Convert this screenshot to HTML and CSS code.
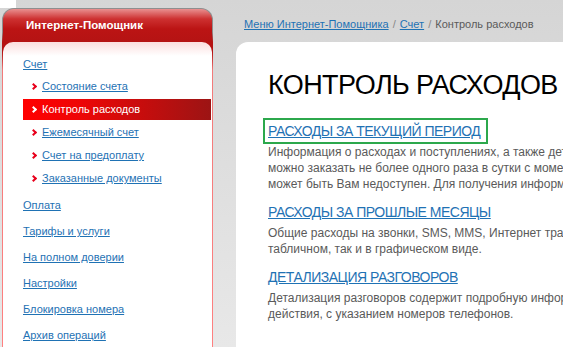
FILE: index.html
```html
<!DOCTYPE html>
<html lang="ru">
<head>
    <meta charset="UTF-8">
    <title>Контроль расходов</title>
    <link rel="stylesheet" href="styles.css">
</head>
<body>
    <div class="page">
        <div class="sidebar">
            <div class="sidebar-head">Интернет-Помощник</div>
            <div class="sidebar-body">
                <ul class="menu">
                    <li class="has-sub">
                        <a href="#">Счет</a>
                        <ul class="sub">
                            <li><a href="#">Состояние счета</a></li>
                            <li class="active"><a href="#">Контроль расходов</a></li>
                            <li><a href="#">Ежемесячный счет</a></li>
                            <li><a href="#">Счет на предоплату</a></li>
                            <li><a href="#">Заказанные документы</a></li>
                        </ul>
                    </li>
                    <li><a href="#">Оплата</a></li>
                    <li><a href="#">Тарифы и услуги</a></li>
                    <li><a href="#">На полном доверии</a></li>
                    <li><a href="#">Настройки</a></li>
                    <li><a href="#">Блокировка номера</a></li>
                    <li><a href="#">Архив операций</a></li>
                </ul>
            </div>
        </div>
        <div class="main">
            <div class="crumbs">
                <a href="#">Меню Интернет-Помощника</a> <span class="sep">/</span>
                <a href="#">Счет</a> <span class="sep">/</span>
                Контроль расходов
            </div>
            <div class="content">
                <h1>КОНТРОЛЬ РАСХОДОВ</h1>
                <div class="section">
                    <h2 class="marked"><a href="#">РАСХОДЫ ЗА ТЕКУЩИЙ ПЕРИОД</a></h2>
                    <p>Информация о расходах и поступлениях, а также детализация расходов за текущий период. Отчет<br>
                    можно заказать не более одного раза в сутки с момента последнего заказа. В некоторых случаях отчет<br>
                    может быть Вам недоступен. Для получения информации обратитесь в контактный центр.</p>
                </div>
                <div class="section">
                    <h2><a href="#">РАСХОДЫ ЗА ПРОШЛЫЕ МЕСЯЦЫ</a></h2>
                    <p>Общие расходы на звонки, SMS, MMS, Интернет трафик и другие услуги за прошлые месяцы как в<br>
                    табличном, так и в графическом виде.</p>
                </div>
                <div class="section">
                    <h2><a href="#">ДЕТАЛИЗАЦИЯ РАЗГОВОРОВ</a></h2>
                    <p>Детализация разговоров содержит подробную информацию о всех звонках за период<br>
                    действия, с указанием номеров телефонов.</p>
                </div>
            </div>
        </div>
    </div>
</body>
</html>
```

FILE: styles.css
```css
html, body {
    height: 100%;
}
body {
    margin: 0;
    font-family: Arial, "Liberation Sans", sans-serif;
    font-size: 11px;
    overflow: hidden;
    background:
        linear-gradient(#fff, #fff) 0 0 / 16px 8px no-repeat,
        linear-gradient(#d5d5d5, #e8e8e8) #e8e8e8;
}
a {
    color: #1f72b4;
}
ul {
    list-style: none;
    margin: 0;
    padding: 0;
}
.page {
    display: flex;
    align-items: flex-start;
    padding: 8px 0 0 2px;
    height: 100%;
    box-sizing: border-box;
}
.sidebar {
    width: 211px;
    flex: none;
    height: 100%;
    display: flex;
    flex-direction: column;
    padding: 1px 1px 0;
    border-radius: 12px 12px 0 0;
    background: linear-gradient(#8e8e8e 24px, #b51313 34px, #b51313 44px, #f27a7a 62px, #ff8080);
    box-sizing: border-box;
}
.sidebar-head {
    flex: none;
    height: 33px;
    padding: 10px 0 0 23px;
    box-sizing: border-box;
    font-size: 11.5px;
    font-weight: bold;
    color: #fff;
    border-radius: 11px 11px 0 0;
    background: linear-gradient(#e99090, #cd3030 10px, #bb1414 20px, #b51313);
}
.sidebar-body {
    flex: 1;
    min-height: 0;
    overflow: hidden;
    padding: 14px 0 0 20px;
    border-radius: 10px 10px 0 0;
    background: linear-gradient(#fbdede, #fff 14px);
}
.menu > li {
    line-height: 16px;
    margin-bottom: 10px;
}
.menu > li.has-sub {
    margin-bottom: 8px;
}
.sub {
    padding-top: 4px;
}
.sub li {
    height: 21px;
    line-height: 21px;
    padding-left: 19px;
    margin-right: 1px;
    position: relative;
}
.sub li + li {
    margin-top: 2px;
}
.sub li::before {
    content: "";
    position: absolute;
    left: 8px;
    top: 8px;
    width: 3px;
    height: 3px;
    border-top: 2px solid #e8001c;
    border-right: 2px solid #e8001c;
    transform: rotate(45deg);
}
.sub li.active {
    background: linear-gradient(to right, #ff0000, #ee0606 30%, #9c1414);
}
.sub li.active a {
    color: #fff;
    text-decoration: none;
}
.sub li.active::before {
    border-color: #fff;
}
.main {
    flex: 1;
    padding-left: 23px;
    min-width: 0;
}
.crumbs {
    height: 34px;
    padding: 8px 0 0 8px;
    line-height: 16px;
    box-sizing: border-box;
    color: #5a5a5a;
    white-space: nowrap;
}
.crumbs .sep {
    color: #888;
    padding: 0 1px;
}
.content {
    background: #fff;
    border-radius: 12px 0 0 0;
    padding: 27px 0 40px 32px;
    height: 400px;
    white-space: nowrap;
}
h1 {
    margin: 0 0 21px;
    font-size: 27px;
    line-height: 32px;
    letter-spacing: -0.6px;
    font-weight: normal;
    color: #000;
}
h2 {
    margin: 0 0 4px;
    font-size: 14px;
    line-height: 18px;
    letter-spacing: -0.5px;
    font-weight: normal;
}
h2.marked {
    display: inline-block;
    position: relative;
}
h2.marked::after {
    content: "";
    position: absolute;
    top: -4px;
    bottom: -4px;
    left: -5px;
    right: -8px;
    border: 2px solid #2ca84c;
}
p {
    margin: 0 0 11px;
    font-size: 12px;
    line-height: 16px;
    color: #5a5a5a;
}
```
